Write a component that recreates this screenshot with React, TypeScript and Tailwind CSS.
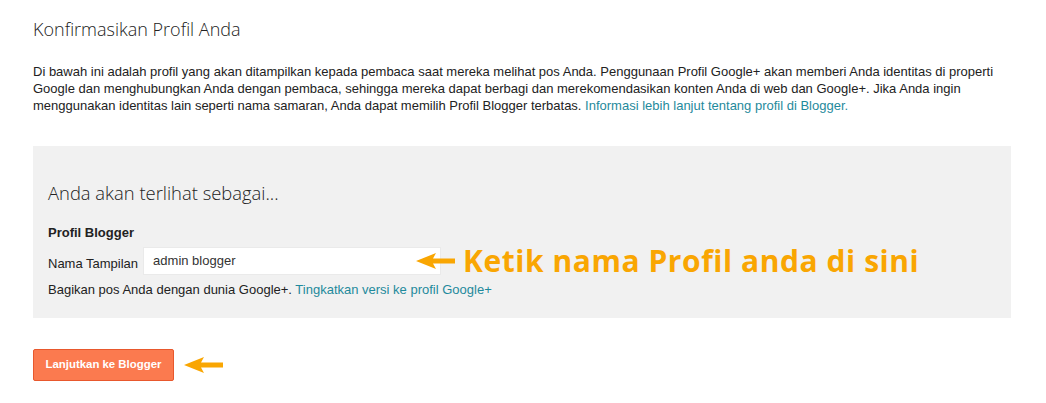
import React from 'react';

const Arrow: React.FC<{ className?: string }> = ({ className }) => (
  <svg className={className} width="40" height="18" viewBox="0 0 40 18">
    <path d="M0 9 L20 1 L17 6.5 L39 6.5 L39 11.5 L17 11.5 L20 17 Z" fill="#f9a602" />
  </svg>
);

const App: React.FC = () => {
  return (
    <div className="w-[1046px] h-[403px] bg-white pl-[33px] pt-[17px] font-['Liberation_Sans',Arial,sans-serif] text-[13px] text-[#222]">
      {/* Header */}
      <h1 className="font-['Open_Sans',sans-serif] font-light text-[18px] leading-[24px] text-[#222]">
        Konfirmasikan Profil Anda
      </h1>
      <p className="mt-[22px] w-[980px] leading-[17px]">
        Di bawah ini adalah profil yang akan ditampilkan kepada pembaca saat mereka melihat pos Anda. Penggunaan Profil Google+ akan memberi Anda identitas di properti Google dan menghubungkan Anda dengan pembaca, sehingga mereka dapat berbagi dan merekomendasikan konten Anda di web dan Google+. Jika Anda ingin menggunakan identitas lain seperti nama samaran, Anda dapat memilih Profil Blogger terbatas.{' '}
        <a className="text-[#1f8a9c]">Informasi lebih lanjut tentang profil di Blogger.</a>
      </p>

      {/* Profile box */}
      <div className="mt-[32px] w-[978px] bg-[#f1f1f1] pl-[15px] pt-[35px] pb-[20px]">
        <h2 className="font-['Open_Sans',sans-serif] font-light text-[18.4px] leading-[24px] text-[#222]">
          Anda akan terlihat sebagai...
        </h2>
        <div className="mt-[19px] font-bold leading-[17px]">Profil Blogger</div>
        <div className="relative mt-[6px] flex items-center">
          <span className="mt-[4px] leading-[17px]">Nama Tampilan</span>
          <div className="ml-[5px] h-[28px] w-[298px] bg-white border border-[#eaeaea] pl-[9px] flex items-center text-[#333]">
            admin blogger
          </div>
          <div className="absolute left-[368px] top-[-4px] flex items-center">
            <Arrow />
            <span className="ml-[7px] font-['Open_Sans',sans-serif] font-bold text-[30px] leading-[36px] tracking-[0.55px] text-[#f9a602]">
              Ketik nama Profil anda di sini
            </span>
          </div>
        </div>
        <div className="mt-[6px] leading-[17px]">
          Bagikan pos Anda dengan dunia Google+.{' '}
          <a className="text-[#1f8a9c]">Tingkatkan versi ke profil Google+</a>
        </div>
      </div>

      {/* Continue */}
      <div className="mt-[31px] flex items-center">
        <button className="h-[32px] w-[141px] rounded-[2px] border border-[#e8582d] bg-[#fb7a4f] text-white font-bold text-[11.4px]">
          Lanjutkan ke Blogger
        </button>
        <Arrow className="ml-[10px]" />
      </div>
    </div>
  );
};

export default App;
